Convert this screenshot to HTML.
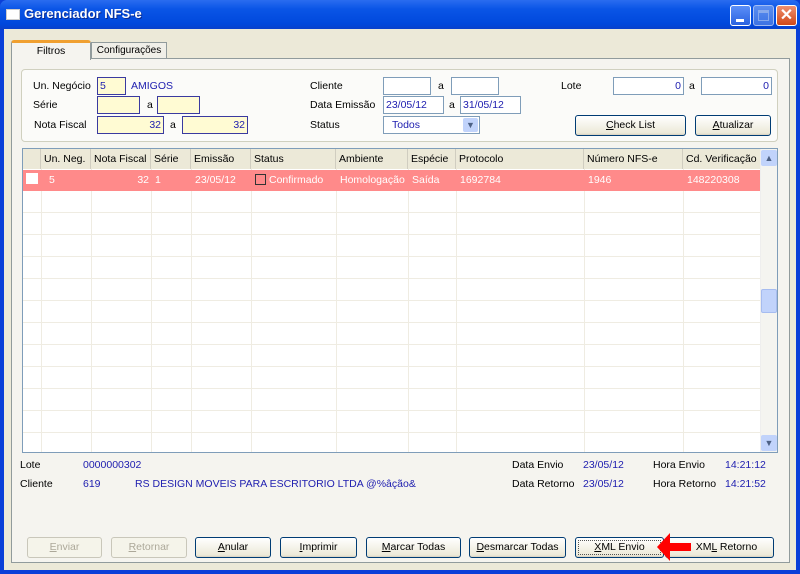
<!DOCTYPE html>
<html><head><meta charset="utf-8">
<style>
*{box-sizing:border-box;margin:0;padding:0}
body{width:800px;height:574px;overflow:hidden;background:#0a3fd8;font-family:Tahoma,"Liberation Sans",sans-serif;font-size:10.5px;color:#000;position:relative}
.a{position:absolute}
#title{left:0;top:0;width:800px;height:30px;background:linear-gradient(#2a6cf0,#0a55e6 30%,#0048dc 80%,#0a3fc8);border-radius:7px 7px 0 0}
#title span{position:absolute;left:24px;top:6px;color:#fff;font-weight:bold;font-size:13px;text-shadow:1px 1px #0a2a90}
#body{left:4px;top:29px;width:792px;height:541px;background:#ECE9D8}
#panel{left:11px;top:58px;width:779px;height:505px;background:#F5F4EF;border:1px solid #919b9c}
.tab{background:#F5F4EF;border:1px solid #919b9c;border-bottom:none}
.lbl{position:absolute}
.in{position:absolute;height:18px;border:1px solid #7f9db9;background:#fff;color:#2020b0;line-height:16px;padding:0 2px}
.y{background:#FFFBD3;border-color:#3a3aa0}
.r{text-align:right}
.btn{position:absolute;height:21px;border:1px solid #003c74;border-radius:3px;background:linear-gradient(#fff,#ece9d8 90%,#d6d0c0);text-align:center;line-height:19px}
.dis{border-color:#c9c7ba;color:#aca899;background:#f5f4ea}
#grid{left:22px;top:148px;width:756px;height:305px;background:#fff;border:1px solid #7f9db9;overflow:hidden}
.hd{position:absolute;top:0;height:20px;line-height:20px;background:#ECE9D8;border-right:1px solid #d0cdc0;padding-left:3px;white-space:nowrap;overflow:hidden}
.vl{position:absolute;top:20px;bottom:0;width:1px;background:#efece2}
.hl{position:absolute;left:0;width:737px;height:1px;background:#efece2}
.c{position:absolute;top:21px;height:21px;line-height:21px;color:#fff;padding-left:4px;white-space:nowrap}
.blue{color:#2020b0}
</style></head><body>
<div class="a" id="title"><div class="a" style="left:6px;top:9px;width:14px;height:11px;background:#fff;border:1px solid #ccc"></div><span>Gerenciador NFS-e</span>
<div class="a" style="left:730px;top:5px;width:21px;height:21px;border:1px solid #fff;border-radius:3px;background:linear-gradient(#5b8ff8,#2a62e0)"><div class="a" style="left:5px;top:13px;width:8px;height:3px;background:#fff"></div></div>
<div class="a" style="left:753px;top:5px;width:21px;height:21px;border:1px solid #c8d6f8;border-radius:3px;background:linear-gradient(#6f9cf4,#4d7ee6);opacity:.8"><div class="a" style="left:4px;top:4px;width:11px;height:11px;border:1px solid #a8c0f0;border-top-width:3px"></div></div>
<div class="a" style="left:776px;top:5px;width:21px;height:21px;border:1px solid #fff;border-radius:3px;background:linear-gradient(#f09070,#d04818);color:#fff;font-weight:bold;font-size:16px;line-height:19px;text-align:center">✕</div>
</div>
<div class="a" id="body"></div>
<div class="a" id="panel"></div>
<div class="a tab" style="left:11px;top:40px;width:80px;height:20px;border-top:3px solid #f0a030;border-radius:3px 3px 0 0;text-align:center;line-height:16px;z-index:2;border-bottom:none;background:#F5F4EF">Filtros</div>
<div class="a tab" style="left:91px;top:42px;width:76px;height:17px;text-align:center;line-height:16px;border-bottom:1px solid #919b9c;background:#f0efe8;font-size:10px;white-space:nowrap">Configurações</div>
<div class="a" style="left:21px;top:69px;width:757px;height:73px;border:1px solid #d0d0bf;border-radius:4px;background:#fbfbf9"></div>

<div class="lbl" style="left:33px;top:80px">Un. Negócio</div>
<div class="in y" style="left:97px;top:77px;width:29px;border-color:#3a3aa0">5</div>
<div class="lbl blue" style="left:131px;top:80px">AMIGOS</div>
<div class="lbl" style="left:33px;top:99px">Série</div>
<div class="in y" style="left:97px;top:96px;width:43px"></div>
<div class="lbl" style="left:147px;top:99px">a</div>
<div class="in y" style="left:157px;top:96px;width:43px"></div>
<div class="lbl" style="left:34px;top:119px">Nota Fiscal</div>
<div class="in y r" style="left:97px;top:116px;width:67px">32</div>
<div class="lbl" style="left:170px;top:119px">a</div>
<div class="in y r" style="left:182px;top:116px;width:66px">32</div>

<div class="lbl" style="left:310px;top:80px">Cliente</div>
<div class="in" style="left:383px;top:77px;width:48px"></div>
<div class="lbl" style="left:438px;top:80px">a</div>
<div class="in" style="left:451px;top:77px;width:48px"></div>
<div class="lbl" style="left:310px;top:99px">Data Emissão</div>
<div class="in" style="left:383px;top:96px;width:61px">23/05/12</div>
<div class="lbl" style="left:449px;top:99px">a</div>
<div class="in" style="left:460px;top:96px;width:61px">31/05/12</div>
<div class="lbl" style="left:310px;top:119px">Status</div>
<div class="in" style="left:383px;top:116px;width:97px;padding-left:8px">Todos<div class="a" style="right:1px;top:1px;width:15px;height:14px;background:#c1d3fb;border-radius:2px;color:#4d6185;font-size:9px;text-align:center;line-height:14px">▼</div></div>

<div class="lbl" style="left:561px;top:80px">Lote</div>
<div class="in r" style="left:613px;top:77px;width:71px">0</div>
<div class="lbl" style="left:689px;top:80px">a</div>
<div class="in r" style="left:701px;top:77px;width:71px">0</div>
<div class="btn" style="left:575px;top:115px;width:111px"><u>C</u>heck List</div>
<div class="btn" style="left:695px;top:115px;width:76px"><u>A</u>tualizar</div>

<div class="a" id="grid">
<div class="hd" style="left:0;width:18px"></div>
<div class="hd" style="left:18px;width:50px">Un. Neg.</div>
<div class="hd" style="left:68px;width:60px">Nota Fiscal</div>
<div class="hd" style="left:128px;width:40px">Série</div>
<div class="hd" style="left:168px;width:60px">Emissão</div>
<div class="hd" style="left:228px;width:85px">Status</div>
<div class="hd" style="left:313px;width:72px">Ambiente</div>
<div class="hd" style="left:385px;width:48px">Espécie</div>
<div class="hd" style="left:433px;width:128px">Protocolo</div>
<div class="hd" style="left:561px;width:99px">Número NFS-e</div>
<div class="hd" style="left:660px;width:78px">Cd. Verificação</div>
<div class="vl" style="left:18px"></div><div class="vl" style="left:68px"></div><div class="vl" style="left:128px"></div><div class="vl" style="left:168px"></div><div class="vl" style="left:228px"></div><div class="vl" style="left:313px"></div><div class="vl" style="left:385px"></div><div class="vl" style="left:433px"></div><div class="vl" style="left:561px"></div><div class="vl" style="left:660px"></div>
<div class="hl" style="top:63px"></div><div class="hl" style="top:85px"></div><div class="hl" style="top:107px"></div><div class="hl" style="top:129px"></div><div class="hl" style="top:151px"></div><div class="hl" style="top:173px"></div><div class="hl" style="top:195px"></div><div class="hl" style="top:217px"></div><div class="hl" style="top:239px"></div><div class="hl" style="top:261px"></div><div class="hl" style="top:283px"></div>
<div class="a" style="left:0;top:21px;width:737px;height:21px;background:#FF8A8A"></div>
<div class="a" style="left:3px;top:24px;width:12px;height:11px;background:#fff"></div>
<div class="c" style="left:22px">5</div>
<div class="c" style="left:68px;width:58px;text-align:right">32</div>
<div class="c" style="left:128px">1</div>
<div class="c" style="left:168px">23/05/12</div>
<div class="a" style="left:232px;top:25px;width:11px;height:11px;border:1px solid #333"></div>
<div class="c" style="left:242px">Confirmado</div>
<div class="c" style="left:313px">Homologação</div>
<div class="c" style="left:385px">Saída</div>
<div class="c" style="left:433px">1692784</div>
<div class="c" style="left:561px">1946</div>
<div class="c" style="left:660px">148220308</div>
<div class="a" style="left:737px;top:0;width:18px;height:303px;background:#f4f4f0;border-left:1px solid #eee"></div>
<div class="a" style="left:738px;top:1px;width:16px;height:16px;background:#c1d3fb;border-radius:2px;color:#4d6185;font-size:9px;text-align:center;line-height:16px">▲</div>
<div class="a" style="left:738px;top:140px;width:16px;height:24px;background:#c1d3fb;border:1px solid #a6bcf0;border-radius:2px"></div>
<div class="a" style="left:738px;top:286px;width:16px;height:16px;background:#c1d3fb;border-radius:2px;color:#4d6185;font-size:9px;text-align:center;line-height:16px">▼</div>
</div>

<div class="lbl" style="left:20px;top:459px">Lote</div>
<div class="lbl blue" style="left:83px;top:459px">0000000302</div>
<div class="lbl" style="left:20px;top:478px">Cliente</div>
<div class="lbl blue" style="left:83px;top:478px">619</div>
<div class="lbl blue" style="left:135px;top:478px">RS DESIGN MOVEIS PARA ESCRITORIO LTDA @%âção&amp;</div>
<div class="lbl" style="left:512px;top:459px">Data Envio</div>
<div class="lbl blue" style="left:583px;top:459px">23/05/12</div>
<div class="lbl" style="left:653px;top:459px">Hora Envio</div>
<div class="lbl blue" style="left:725px;top:459px">14:21:12</div>
<div class="lbl" style="left:512px;top:478px">Data Retorno</div>
<div class="lbl blue" style="left:583px;top:478px">23/05/12</div>
<div class="lbl" style="left:653px;top:478px">Hora Retorno</div>
<div class="lbl blue" style="left:725px;top:478px">14:21:52</div>

<div class="btn dis" style="left:27px;top:537px;width:75px"><u>E</u>nviar</div>
<div class="btn dis" style="left:111px;top:537px;width:76px"><u>R</u>etornar</div>
<div class="btn" style="left:195px;top:537px;width:76px"><u>A</u>nular</div>
<div class="btn" style="left:280px;top:537px;width:77px"><u>I</u>mprimir</div>
<div class="btn" style="left:366px;top:537px;width:95px"><u>M</u>arcar Todas</div>
<div class="btn" style="left:469px;top:537px;width:97px"><u>D</u>esmarcar Todas</div>
<div class="btn" style="left:575px;top:537px;width:89px;outline:1px dotted #555;outline-offset:-4px"><u>X</u>ML Envio</div>
<div class="btn" style="left:665px;top:537px;width:109px;padding-left:14px">XM<u>L</u> Retorno</div>
<svg class="a" style="left:655px;top:531px" width="42" height="32" viewBox="0 0 42 32"><path d="M2 16 L15 2 L15 12 L36 12 L36 20 L15 20 L15 30 Z" fill="#f00"/></svg>
</body></html>
